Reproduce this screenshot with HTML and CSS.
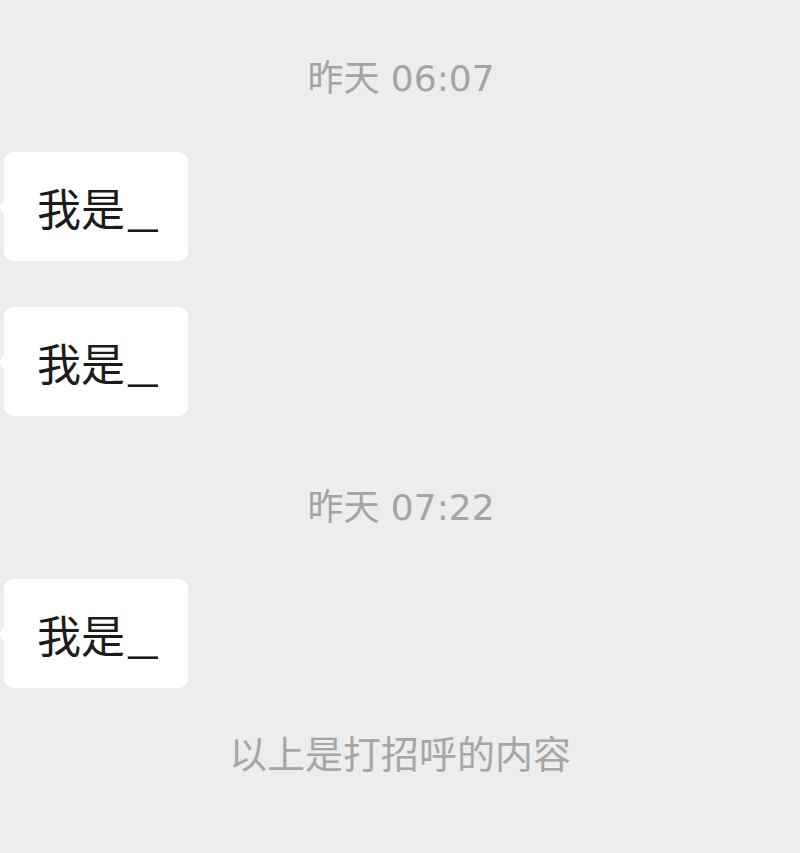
FILE: index.html
```html
<!DOCTYPE html>
<html lang="zh-CN">
<head>
<meta charset="utf-8">
<link rel="stylesheet" href="styles.css">
</head>
<body>
<main class="chat">
  <div class="time">昨天 06:07</div>
  <div class="msg"><div class="bubble">我是<span class="us">_</span></div></div>
  <div class="msg"><div class="bubble">我是<span class="us">_</span></div></div>
  <div class="time time-2">昨天 07:22</div>
  <div class="msg msg-3"><div class="bubble">我是<span class="us">_</span></div></div>
  <div class="notice">以上是打招呼的内容</div>
</main>
</body>
</html>
```
FILE: styles.css
```css
html, body {
  margin: 0;
  padding: 0;
  background: #ededed;
}
body {
  width: 800px;
  height: 853px;
  overflow: hidden;
  font-family: "DejaVu Sans", "Noto Sans CJK SC", sans-serif;
}
.chat {
  display: flex;
  flex-direction: column;
  padding-top: 54px;
}
.time {
  text-align: center;
  font-size: 36px;
  line-height: 50px;
  color: #a4a4a4;
  height: 50px;
  padding-left: 2px;
}
.time-2 {
  margin-top: 67px;
}
.msg {
  display: flex;
  margin-top: 48px;
}
.msg + .msg {
  margin-top: 46px;
}
.msg-3 {
  margin-top: 46px;
}
.bubble {
  position: relative;
  margin-left: 4px;
  background: #ffffff;
  border-radius: 9px;
  height: 109px;
  box-sizing: border-box;
  padding: 0 33px 0 33px;
  display: flex;
  align-items: center;
  font-family: "Noto Sans CJK SC", sans-serif;
  font-size: 44px;
  color: #1b1b1b;
  line-height: 1;
}
.bubble::before {
  content: "";
  position: absolute;
  left: -5px;
  top: 50%;
  margin-top: -7px;
  border-style: solid;
  border-width: 7px 5px 7px 0;
  border-color: transparent #ffffff transparent transparent;
}
.us {
  display: inline-block;
  transform: scaleX(1.3);
  transform-origin: left center;
  margin-left: 2px;
  margin-right: 3px;
}
.notice {
  margin-top: 39px;
  text-align: center;
  font-family: "Noto Sans CJK SC", sans-serif;
  font-size: 38px;
  line-height: 50px;
  color: #a6a6a6;
}
```
